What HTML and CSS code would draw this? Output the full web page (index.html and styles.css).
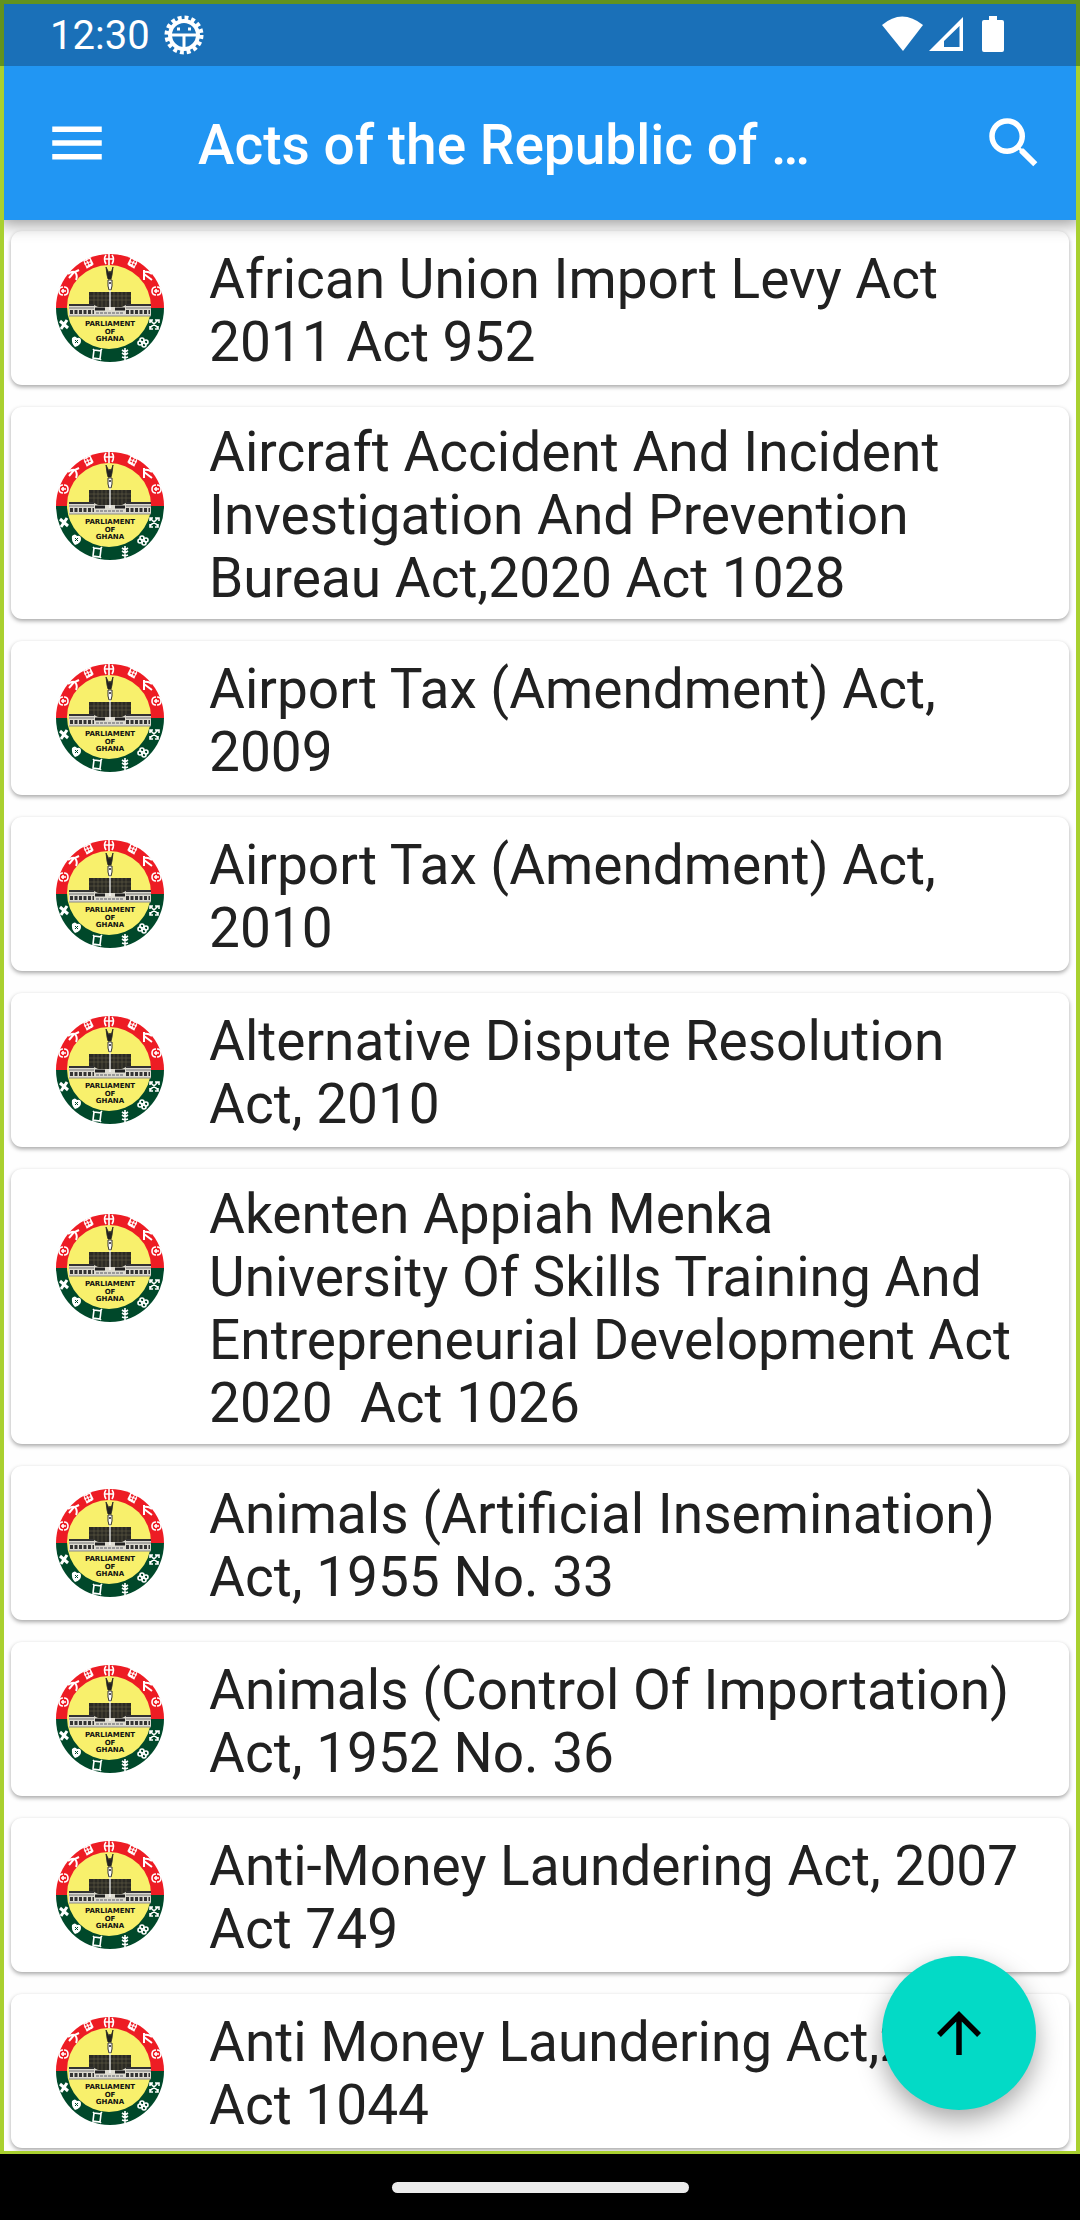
FILE: index.html
```
<!DOCTYPE html>
<html lang="en">
<head>
    <meta charset="UTF-8">
    <meta name="viewport" content="width=device-width, initial-scale=1.0">
    <title>Acts of the Republic of Ghana</title>
    <link rel="stylesheet" href="styles.css">
</head>
<body>
    <div class="phone">
        <div class="status-bar">
            <span class="time">12:30</span>
            <svg class="debug-icon" width="40" height="40" viewBox="0 0 40 40" fill="none" stroke="#fff">
                <circle cx="20" cy="20" r="14" stroke-width="4"/>
                <circle cx="20" cy="20" r="17" stroke-width="5" stroke-dasharray="3.8 2.877"/>
                <path d="M7 20h26M20 20v14" stroke-width="3"/>
                <path d="M13 14h3M24 14h3" stroke-width="3"/>
            </svg>
            <div class="status-right">
                <svg width="42" height="36" viewBox="0 0 42 36"><path d="M0 9Q20-8 41 9L21 35z" fill="#fff"/></svg>
                <svg width="36" height="36" viewBox="0 0 36 36"><path d="M35 1v34H1zM31.500 10L16 25v6h15.500z" fill="#fff" fill-rule="evenodd"/></svg>
                <svg class="battery" width="22" height="36" viewBox="0 0 22 36"><path d="M7 0h8v4h5q2 0 2 2v28q0 2-2 2H2q-2 0-2-2V6q0-2 2-2h5z" fill="#fff"/></svg>
            </div>
        </div>

        <header class="app-bar">
            <button class="icon-btn" aria-label="Menu">
                <svg width="66" height="66" viewBox="0 0 24 24" fill="#fff"><path d="M3 18h18v-2H3v2zm0-5h18v-2H3v2zm0-7v2h18V6H3z"/></svg>
            </button>
            <h1>Acts of the Republic of Ghana</h1>
            <button class="icon-btn" aria-label="Search">
                <svg width="66" height="66" viewBox="0 0 24 24" fill="#fff"><path d="M15.500 14h-.79l-.28-.27A6.471 6.471 0 0 0 16 9.500 6.500 6.500 0 1 0 9.500 16c1.610 0 3.090-.59 4.230-1.570l.27.28v.79l5 4.990L20.490 19l-4.990-5zm-6 0C7.010 14 5 11.990 5 9.500S7.010 5 9.500 5 14 7.010 14 9.500 11.990 14 9.500 14z"/></svg>
            </button>
        </header>

        <ul class="acts">
            <li class="act">
                <!-- parliament seal, reused by the other rows -->
                <svg class="seal" viewBox="0 0 108 108">
                    <g id="seal">
                        <path d="M0 54a54 54 0 0 1 108 0z" fill="#ed1c24"/>
                        <path d="M0 54a54 54 0 0 0 108 0z" fill="#00482a"/>
                        <circle cx="53" cy="53" r="42" fill="#f8f06c"/>
                        <!-- ring symbols -->
                        <g fill="none" stroke="#fff" stroke-width="1.6">
                            <path d="M50 1q-3 4 0 9M56 1q3 4 0 9M53 0v11M49 5h8"/>
                            <g stroke-width="1.1">
                                <path id="knot" d="M28 7l6-3 3 6-6 4zM28 10l8-3M30 13l7-4M30 5l4 8M34 4l2 8"/>
                                <use href="#knot" transform="matrix(-1 0 0 1 109 0)"/>
                            </g>
                            <path d="M12 20q4-3 7-2l4-2M19 18q3 4 1 8M18 18l-5 6" stroke-width="2"/>
                            <path d="M96 20q-4-3-8-2M88 16v10M88 20l8 6" stroke-width="2"/>
                            <path id="rings" d="M7 33q-4 0-4 4t4 4M8 33q4 0 4 4t-4 4M7 35v4M5 37h5"/>
                            <use href="#rings" x="93"/>
                            <path d="M4 67l8 7M11 66l-6 9" stroke-width="3"/>
                            <path d="M94 66l8 8M102 66l-8 8M94 69v-3h3M99 66h4v3M94 72v3h3M102 72v3h-3"/>
                            <circle cx="86" cy="86" r="2"/><circle cx="90" cy="88" r="2"/><circle cx="88" cy="91" r="2"/><circle cx="84" cy="89" r="2"/>
                            <path d="M38 96l7 1-1 8-7-1zM37 95l2 2M46 95l-2 2M36 106l2-2M45 106l-2-2"/>
                            <path d="M69 94v12M66 96l3 2 3-2M66 99l3 2 3-2M66 103l3 1 3-1"/>
                        </g>
                        <path d="M16 84q3-3 5 0q4-1 4 3q0 4-6 6q-4-4-3-9z" fill="#fff"/>
                        <path d="M19 86l3 3M22 86l-3 3" stroke="#00482a"/>
                        <!-- eagle and mace -->
                        <path d="M50 13l3 6 1-2 1 2 2-6-1 8-1 4h-3l-1-4z" fill="#222" stroke="#222" stroke-width=".8"/>
                        <path d="M52 26h4v6l-1 4h-2l-1-4z" fill="#fff" stroke="#333"/>
                        <circle cx="54" cy="29" r="1" fill="#222"/>
                        <!-- building -->
                        <path d="M33 38h42v15H33z" fill="#2b2a24"/>
                        <path d="M33 42h42M33 46h42M38 38v15M42 38v15M46 38v15M50 38v15M58 38v15M62 38v15M66 38v15M70 38v15" stroke="#6d6a4c" stroke-width=".5"/>
                        <path d="M13 51h25l4 2h24l4-2h25v11H13z" fill="#dcdad0"/>
                        <path d="M13 51h25M70 51h25" stroke="#333" stroke-width="2"/>
                        <path d="M13 54h25M70 54h25" stroke="#777" stroke-width="1"/>
                        <path d="M14 58h24M70 58h24" stroke="#333" stroke-width="4" stroke-dasharray="3 1.5"/>
                        <path d="M39 55h10M59 55h10" stroke="#222" stroke-width="3"/>
                        <path d="M40 59h28" stroke="#999" stroke-width="2" stroke-dasharray="3 1"/>
                        <path d="M13 62h82" stroke="#888"/>
                        <path d="M54 36v20" stroke="#fff" stroke-width="1.2"/>
                        <g class="seal-text" text-anchor="middle">
                            <text x="54" y="72">PARLIAMENT</text>
                            <text x="54" y="80">OF</text>
                            <text x="54" y="87">GHANA</text>
                        </g>
                    </g>
                </svg>
                <span>African Union Import Levy Act 2011 Act 952</span>
            </li>
            <li class="act tall">
                <svg class="seal" viewBox="0 0 108 108"><use href="#seal"/></svg>
                <span>Aircraft Accident And Incident Investigation And Prevention Bureau Act,2020 Act 1028</span>
            </li>
            <li class="act">
                <svg class="seal" viewBox="0 0 108 108"><use href="#seal"/></svg>
                <span>Airport Tax (Amendment) Act, 2009</span>
            </li>
            <li class="act">
                <svg class="seal" viewBox="0 0 108 108"><use href="#seal"/></svg>
                <span>Airport Tax (Amendment) Act, 2010</span>
            </li>
            <li class="act">
                <svg class="seal" viewBox="0 0 108 108"><use href="#seal"/></svg>
                <span>Alternative Dispute Resolution Act, 2010</span>
            </li>
            <li class="act tall">
                <svg class="seal" viewBox="0 0 108 108"><use href="#seal"/></svg>
                <span>Akenten Appiah Menka University Of Skills Training And Entrepreneurial Development Act 2020 &nbsp;Act 1026</span>
            </li>
            <li class="act">
                <svg class="seal" viewBox="0 0 108 108"><use href="#seal"/></svg>
                <span>Animals (Artificial Insemination) Act, 1955 No. 33</span>
            </li>
            <li class="act">
                <svg class="seal" viewBox="0 0 108 108"><use href="#seal"/></svg>
                <span>Animals (Control Of Importation) Act, 1952 No. 36</span>
            </li>
            <li class="act">
                <svg class="seal" viewBox="0 0 108 108"><use href="#seal"/></svg>
                <span>Anti-Money Laundering Act, 2007 Act 749</span>
            </li>
            <li class="act">
                <svg class="seal" viewBox="0 0 108 108"><use href="#seal"/></svg>
                <span>Anti Money Laundering Act,2020 Act 1044</span>
            </li>
        </ul>

        <button class="fab" aria-label="Scroll to top">
            <svg width="66" height="66" viewBox="0 0 24 24"><path d="M4 12l1.410 1.410L11 7.830V20h2V7.830l5.580 5.590L20 12l-8-8-8 8z"/></svg>
        </button>
    </div>

    <div class="nav-bar"><div class="pill"></div></div>
</body>
</html>
```
FILE: styles.css
```
* {
    box-sizing: border-box;
}
body {
    margin: 0;
    height: 100vh;
    display: flex;
    flex-direction: column;
    font-family: Roboto, sans-serif;
    background-color: #000;
}
.phone {
    position: relative;
    flex: 1;
    min-height: 0;
    display: flex;
    flex-direction: column;
    overflow: hidden;
    background-color: #fefefe;
}
/* lime frame around the whole app */
.phone::after {
    content: "";
    position: absolute;
    z-index: 2;
    inset: 0;
    border: 4px solid #a9d02f;
    border-bottom-width: 3px;
    pointer-events: none;
}
.status-bar {
    position: relative;
    z-index: 3;
    display: flex;
    align-items: center;
    height: 66px;
    padding: 0 72px 0 46px;
    border: 4px solid #62921f;
    border-bottom: none;
    background-color: #1a70b8;
    color: #fff;
    font-size: 40px;
}
.debug-icon {
    margin-left: 14px;
}
.status-right {
    display: flex;
    gap: 4px;
    margin-left: auto;
    padding-bottom: 3px;
}
.battery {
    margin-left: 14px;
}
.app-bar {
    position: relative;
    z-index: 1;
    display: flex;
    align-items: center;
    height: 154px;
    padding: 0 33px 0 44px;
    background-color: #2196f3;
    color: #fff;
    box-shadow: 0 4px 16px rgba(0, 0, 0, 0.4);
}
.app-bar h1 {
    flex: 1;
    margin: 0 150px 0 88px;
    padding-top: 3px;
    font-size: 55px;
    font-weight: 500;
    line-height: 66px;
    white-space: nowrap;
    overflow: hidden;
    text-overflow: ellipsis;
}
.icon-btn {
    display: flex;
    padding: 0;
    border: none;
    background: none;
    cursor: pointer;
}
.acts {
    flex: 1;
    display: flex;
    flex-direction: column;
    gap: 22px;
    min-height: 0;
    margin: 0;
    padding: 11px;
    list-style: none;
}
.act {
    display: flex;
    flex-shrink: 0;
    align-items: center;
    gap: 45px;
    min-height: 154px;
    padding: 9px 44px 9px 45px;
    border-radius: 11px;
    background-color: #fff;
    box-shadow: 0 2px 4px rgba(0, 0, 0, 0.35);
    color: #212121;
    font-size: 55px;
    line-height: 63px;
}
.act span {
    padding-top: 5px;
}
.act.tall {
    align-items: flex-start;
}
.seal {
    flex-shrink: 0;
    width: 108px;
    height: 108px;
}
.seal-text {
    font-family: "DejaVu Sans", sans-serif;
    font-weight: bold;
    font-size: 7px;
    fill: #111;
}
.tall .seal {
    margin-top: 36px;
}
.fab {
    position: absolute;
    right: 44px;
    bottom: 44px;
    display: flex;
    align-items: center;
    justify-content: center;
    width: 154px;
    height: 154px;
    padding: 0;
    border: none;
    border-radius: 50%;
    background-color: #03dac6;
    box-shadow: 0 10px 26px rgba(0, 0, 0, 0.35);
    cursor: pointer;
}
.nav-bar {
    display: flex;
    align-items: center;
    justify-content: center;
    height: 66px;
}
.pill {
    width: 297px;
    height: 11px;
    border-radius: 6px;
    background-color: #ebebeb;
}
```
